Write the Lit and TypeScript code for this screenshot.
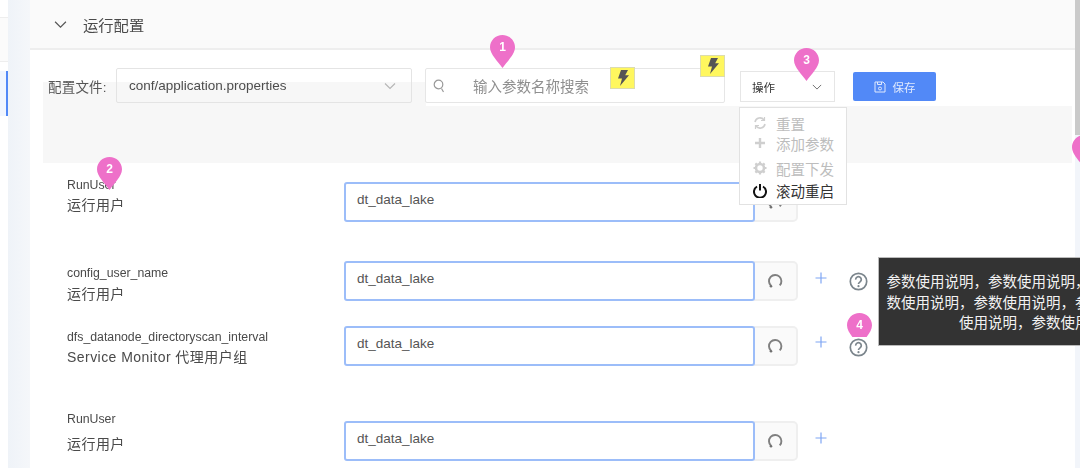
import { LitElement, html, css } from "lit";
import { customElement } from "lit/decorators.js";

const chevron = (w = 12, c = "#666") => html`<svg width=${w} height=${w} viewBox="0 0 12 12" fill="none" stroke=${c} stroke-width="1.1"><path d="M1 3.5 6 8.5 11 3.5"/></svg>`;
const bolt = html`<svg width="14" height="16" viewBox="0 0 14 16"><path fill="#555" d="M5 0h7L9.2 5.2H13L4 16l2-7.6H2z"/></svg>`;
const spin = html`<svg width="16" height="16" viewBox="0 0 16 16" fill="none" stroke="#808080" stroke-width="1.9"><path d="M4 12.700A6.200 6.200 0 1 1 12.700 12.400"/><circle cx="4" cy="13.200" r="1.300" fill="#707070" stroke="none"/></svg>`;
const plus = html`<svg width="12" height="12" viewBox="0 0 12 12" stroke="#7fa6f3" stroke-width="1.2"><path d="M6 .5v11M.5 6h11"/></svg>`;
const help = html`<svg width="19" height="19" viewBox="0 0 19 19" fill="none"><circle cx="9.5" cy="9.5" r="8.2" stroke="#7b858c" stroke-width="1.7"/><path d="M6.7 7.6a2.8 2.8 0 1 1 4.4 2.2c-1 .7-1.6 1.1-1.6 2.2" stroke="#7b858c" stroke-width="1.7"/><circle cx="9.5" cy="14.2" r="1.1" fill="#7b858c"/></svg>`;

const rows = [
  { name: "RunUser", desc: "运行用户", cls: "r1", lbl: "l-up", help: false },
  { name: "config_user_name", desc: "运行用户", cls: "r2", lbl: "", help: true },
  { name: "dfs_datanode_directoryscan_interval", desc: "Service Monitor 代理用户组", cls: "r3", lbl: "l-mid", help: true },
  { name: "RunUser", desc: "运行用户", cls: "r4", lbl: "l-far", help: false },
];

const tipText = "参数使用说明，".repeat(8);

@customElement("app-root")
export class AppRoot extends LitElement {
  static styles = css`
    :host { display: block; width: 1080px; height: 468px; overflow: hidden; background: #fff; font-family: "Liberation Sans", "Noto Sans CJK SC", sans-serif; color: #444; }
    .root { position: relative; width: 1080px; height: 468px; overflow: hidden; display: grid; grid-template-columns: 8px 22px 1fr 5px; filter: blur(0.45px); }
    .side { background: #fbfbfb; display: flex; flex-direction: column; }
    .s-top { height: 17px; border-bottom: 1px solid #eee; background: #fff; }
    .s-mid { height: 43px; border-bottom: 1px solid #eee; background: #fbfbfb; }
    .s-gap { height: 9px; background: #fff; }
    .s-sel { height: 45px; background: #f1f6ff; border-right: 2px solid #5289f7; }
    .s-rest { flex: 1; background: #fff; }
    .gutter { background: linear-gradient(90deg, #eff3f8, #f5f7fa); }
    .main { min-width: 0; }
    .head { height: 48px; background: #fafafa; border-bottom: 2px solid #eee; display: flex; align-items: center; padding-left: 24px; gap: 16px; font-size: 15.3px; color: #4a4a4a; }
    .body { padding: 0 3px 0 13px; }
    .toolbar { height: 56px; display: flex; align-items: flex-start; background: linear-gradient(#f7f7f7, #f7f7f7) no-repeat 0 32px / 383px 24px; }
    .flabel { width: 68px; margin-left: 5px; margin-top: 18px; height: 35px; display: flex; align-items: center; font-size: 13.5px; color: #555; white-space: nowrap; letter-spacing: .2px; }
    .select { box-sizing: border-box; width: 296px; height: 35px; margin-top: 18px; border: 1px solid #e4e4e4; border-radius: 2px; display: flex; align-items: center; justify-content: space-between; padding: 0 15px 0 12px; font-size: 13.5px; color: #4d4d4d; }
    .search { box-sizing: border-box; width: 300px; height: 35px; margin: 18px 0 0 13px; border: 1px solid #e6e6e6; border-radius: 2px; background: #fff; display: flex; align-items: center; padding-left: 7px; gap: 28px; font-size: 14.5px; color: #8f8f8f; }
    .op { box-sizing: border-box; width: 95px; height: 31px; margin: 21px 0 0 15px; border: 1px solid #e6e6e6; background: #fff; display: flex; align-items: center; justify-content: space-between; padding: 0 12px 0 11px; font-size: 11.5px; color: #333; }
    .save { box-sizing: border-box; width: 83px; height: 29px; margin: 22px 0 0 18px; background: #5289f7; border-radius: 2px; color: #dfe9fd; display: flex; align-items: center; justify-content: center; gap: 7px; font-size: 11.5px; }
    .band { height: 57px; background: #f7f7f7; }
    .row { display: flex; align-items: flex-start; }
    .r1 { margin-top: 19px; } .r2 { margin-top: 39px; } .r3 { margin-top: 24px; } .r4 { margin-top: 55px; }
    .label { width: 301px; padding-left: 24px; box-sizing: border-box; margin-top: 5px; height: 36px; }
    .l-up { margin-top: -4px; }
    .l-mid { margin-top: 4px; }
    .l-far { margin-top: -9px; }
    .name { font-size: 12.3px; line-height: 14px; color: #4a4a4a; white-space: nowrap; }
    .desc { font-size: 14px; line-height: 20px; margin-top: 4px; color: #4a4a4a; white-space: nowrap; letter-spacing: .45px; }
    .l-up .desc, .l-mid .desc { margin-top: 3px; }
    .l-far .desc { margin-top: 8px; }
    .input { box-sizing: border-box; width: 411px; height: 40px; border: 2px solid #9cbdf9; border-radius: 3px; background: #fff; padding: 0 11px; display: flex; align-items: center; font-size: 13.5px; color: #555; position: relative; z-index: 1; }
    .input span { position: relative; top: -3px; }
    .reload { box-sizing: border-box; width: 44px; height: 40px; margin-left: -1px; border: 2px solid #efefef; border-left: 0; border-radius: 0 5px 5px 0; background: #fafafa; display: flex; align-items: center; justify-content: center; }
    .plus { margin: 11px 0 0 17px; height: 12px; display: flex; }
    .help { margin: 11px 0 0 22px; width: 19px; height: 19px; border-radius: 50%; background: #fff; position: relative; z-index: 3; display: flex; }
    .r3 .help { margin-top: 12px; }
    .r3 .plus { margin-top: 10px; }
    .menu { position: absolute; z-index: 4; left: 739px; top: 107px; box-sizing: border-box; width: 108px; height: 98px; background: #fff; border: 1px solid #e2e2e2; font-size: 14.5px; color: #bdbdbd; }
    .mi { position: absolute; left: 0; right: 0; height: 20px; display: flex; align-items: center; white-space: nowrap; }
    .mi svg { margin: 0 9px 0 13px; flex: none; }
    .m1 { top: 5px; } .m2 { top: 25px; } .m3 { top: 50px; } .m4 { top: 72px; color: #333; }
    .tip { position: absolute; z-index: 2; left: 878px; top: 257px; box-sizing: border-box; width: 335px; height: 89px; background: #333; border: 1px solid #bbb; border-right: 0; padding: 14px 6px 0; font-size: 14.5px; line-height: 20.7px; color: #f2f2f2; text-align: center; }
    .bolt { position: absolute; z-index: 5; box-sizing: border-box; width: 25px; height: 22px; background: #fff75e; border: 1px solid #dcdcae; display: flex; align-items: center; justify-content: center; }
    .b1 { left: 610px; top: 67px; } .b2 { left: 700px; top: 55px; }
    .pin { position: absolute; z-index: 6; width: 25px; height: 33px; }
    .pin svg { display: block; }
    .pin b { position: absolute; left: 0; right: 0; top: 4px; text-align: center; font-size: 12px; line-height: 16px; color: #fff; font-weight: 700; font-family: "Liberation Sans", sans-serif; }
    .p1 { left: 490px; top: 35px; } .p2 { left: 97px; top: 157px; } .p3 { left: 794px; top: 48px; }
    .p4 { left: 847px; top: 313px; z-index: 2; height: 24px; overflow: hidden; } .p5 { left: 1072px; top: 135px; }
    .bar { display: flex; flex-direction: column; background: #f2f5fa; }
    .thumb { height: 135px; background: #cacaca; }
  `;

  private pin(cls: string, n: string) {
    return html`<div class="pin ${cls}">
      <svg width="25" height="33" viewBox="0 0 25 33"><path fill="#ee70c9" d="M12.5 0C19.4 0 25 5.500 25 12.300 25 19.500 17 26.500 12.500 33 8 26.500 0 19.500 0 12.300 0 5.500 5.600 0 12.500 0z"/></svg>
      <b>${n}</b>
    </div>`;
  }

  render() {
    return html`<div class="root">
      <div class="side">
        <div class="s-top"></div><div class="s-mid"></div><div class="s-gap"></div><div class="s-sel"></div><div class="s-rest"></div>
      </div>
      <div class="gutter"></div>
      <div class="main">
        <div class="head">${chevron(13, "#555")}<span>运行配置</span></div>
        <div class="body">
          <div class="toolbar">
            <div class="flabel">配置文件:</div>
            <div class="select"><span>conf/application.properties</span>${chevron(12, "#b5b5b5")}</div>
            <div class="search">
              <svg width="12" height="14" viewBox="0 0 12 14" fill="none" stroke="#999" stroke-width="1.2"><circle cx="5.500" cy="5.500" r="4.300"/><path d="M8.500 9.500 10.500 13"/></svg>
              <span>输入参数名称搜索</span>
            </div>
            <div class="op"><span>操作</span>${chevron(10, "#666")}</div>
            <div class="save">
              <svg width="12" height="12" viewBox="0 0 12 12" fill="none" stroke="#dfe9fd" stroke-width="1"><path d="M1 1h8l2 2v8H1z"/><path d="M3.500 1v2.500h4V1"/><circle cx="6" cy="7.500" r="1.500"/></svg>
              <span>保存</span>
            </div>
          </div>
          <div class="band"></div>
          ${rows.map((r) => html`<div class="row ${r.cls}">
            <div class="label ${r.lbl}"><div class="name">${r.name}</div><div class="desc">${r.desc}</div></div>
            <div class="input"><span>dt_data_lake</span></div>
            <div class="reload">${spin}</div>
            <div class="plus">${plus}</div>
            ${r.help ? html`<div class="help">${help}</div>` : ""}
          </div>`)}
        </div>
      </div>
      <div class="bar"><div class="thumb"></div></div>

      <div class="menu">
        <div class="mi m1"><svg width="14" height="14" viewBox="0 0 14 14" fill="none" stroke="#cfcfcf" stroke-width="1.600"><path d="M2 6a5 5 0 0 1 9-2"/><path d="M12 8a5 5 0 0 1-9 2"/><path d="M11.500 1v3.500H8M2.500 13V9.500H6" stroke-width="1.200"/></svg>重置</div>
        <div class="mi m2"><svg width="14" height="14" viewBox="0 0 14 14" stroke="#cfcfcf" stroke-width="2.400"><path d="M7 2v10M2 7h10"/></svg>添加参数</div>
        <div class="mi m3"><svg width="14" height="14" viewBox="0 0 14 14"><circle cx="7" cy="7" r="4" fill="none" stroke="#cfcfcf" stroke-width="2.600"/><path stroke="#cfcfcf" stroke-width="2.200" d="M7 .500v2.500M7 11v2.500M.500 7H3M11 7h2.500M2.400 2.400l1.800 1.800M9.800 9.800l1.800 1.800M11.600 2.400 9.800 4.200M4.200 9.800l-1.800 1.800"/></svg>配置下发</div>
        <div class="mi m4"><svg width="14" height="15" viewBox="0 0 14 15" fill="none" stroke="#111" stroke-width="2"><path d="M4 3.500a6 6 0 1 0 6 0"/><path d="M7 1v6.500"/></svg>滚动重启</div>
      </div>
      <div class="tip">${tipText}</div>
      <div class="bolt b1">${bolt}</div>
      <div class="bolt b2">${bolt}</div>
      ${this.pin("p1", "1")}${this.pin("p2", "2")}${this.pin("p3", "3")}${this.pin("p4", "4")}${this.pin("p5", "")}
    </div>`;
  }
}
